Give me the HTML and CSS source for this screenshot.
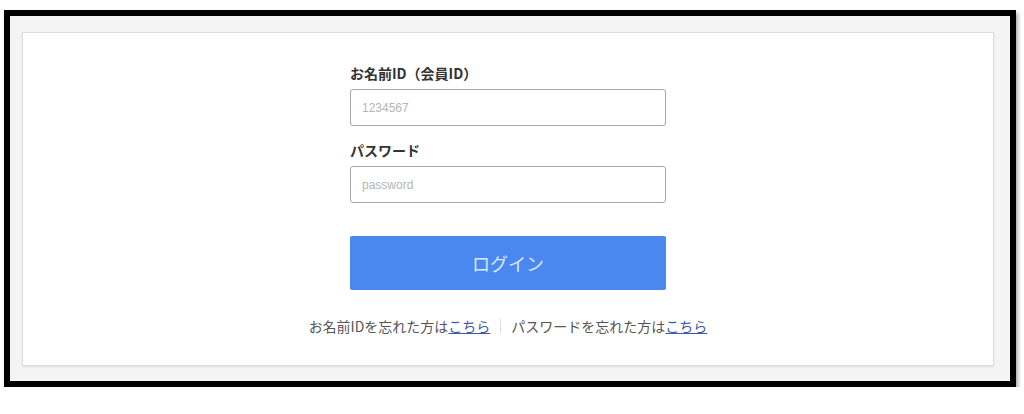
FILE: index.html
```html
<!DOCTYPE html>
<html lang="ja">

<head>
    <meta charset="UTF-8">
    <meta name="viewport" content="width=device-width, initial-scale=1.0">
    <title>ログイン</title>
    <link rel="stylesheet" href="styles.css">
</head>

<body>
    <div class="frame">
        <div class="card">
            <form class="login-form">
                <label class="field-label" for="memberId">お名前ID（会員ID）</label>
                <input class="field-input" id="memberId" type="text" placeholder="1234567">

                <label class="field-label second" for="password">パスワード</label>
                <input class="field-input" id="password" type="password" placeholder="password">

                <button class="login-button" type="button">ログイン</button>
            </form>

            <div class="help-links">
                <span>お名前IDを忘れた方は<a href="#">こちら</a></span>
                <span class="divider"></span>
                <span>パスワードを忘れた方は<a href="#">こちら</a></span>
            </div>
        </div>
    </div>
</body>

</html>
```

FILE: styles.css
```css
body {
    margin: 0;
    padding: 10px 0 0 4px;
    background-color: #fff;
    font-family: "Noto Sans CJK JP", "Noto Sans", sans-serif;
    color: #333;
}

.frame {
    width: 972px;
    height: 334px;
    padding: 16px 16px 15px 12px;
    border: 6px solid #000;
    background-color: #f4f4f4;
    box-shadow: 2px 3px 4px rgba(0, 0, 0, 0.35);
}

.card {
    height: 100%;
    box-sizing: border-box;
    padding-top: 29px;
    background-color: #fff;
    border: 1px solid #dcdcdc;
    box-shadow: 0 1px 2px rgba(0, 0, 0, 0.08);
}

.login-form {
    width: 316px;
    margin: 0 auto;
    display: flex;
    flex-direction: column;
}

.field-label {
    font-size: 14px;
    font-weight: bold;
    line-height: 22px;
    color: #333;
    margin-bottom: 5px;
}

.field-label.second {
    margin-top: 13px;
}

.field-input {
    height: 37px;
    box-sizing: border-box;
    padding: 0 11px;
    border: 1px solid #a8a8a8;
    border-radius: 3px;
    font-family: "Liberation Sans", Arial, sans-serif;
    font-size: 12px;
    color: #333;
    outline: none;
}

.field-input::placeholder {
    color: #b5b5b5;
}

.login-button {
    margin-top: 33px;
    height: 54px;
    border: none;
    border-radius: 2px;
    background-color: #4a87ef;
    color: #dbe7fb;
    font-family: "Noto Sans CJK JP", sans-serif;
    font-size: 18px;
    cursor: pointer;
}

.help-links {
    margin-top: 26px;
    display: flex;
    justify-content: center;
    align-items: center;
    gap: 10px;
    font-size: 14px;
    line-height: 20px;
    color: #555;
}

.help-links a {
    color: #3b5aa3;
    text-decoration: underline;
}

.divider {
    width: 1px;
    height: 14px;
    background-color: #ddd;
}
```
